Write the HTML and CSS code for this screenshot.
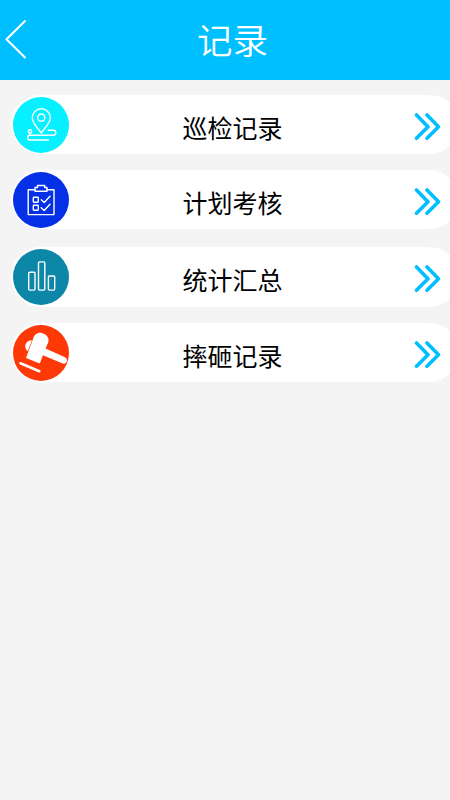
FILE: index.html
```
<!DOCTYPE html>
<html lang="zh-CN">
<head>
  <meta charset="UTF-8">
  <meta name="viewport" content="width=device-width, initial-scale=1">
  <title>记录</title>
  <link rel="stylesheet" href="styles.css">
</head>
<body>
  <header class="header">
    <a class="back" href="#" aria-label="返回">
      <svg width="30" height="44" viewBox="0 0 30 44"><path d="M25 3 L6.5 21.3 L25 39.5"/></svg>
    </a>
    <h1>记录</h1>
  </header>

  <main class="menu">
    <a class="item" href="#">
      <span class="icon patrol">
        <svg viewBox="0 0 56 56">
          <path d="M28.2 36 C24.5 30.5 19.3 26.5 19.3 20.8 A9 9 0 0 1 37.3 20.8 C37.3 26.5 32 30.5 28.2 36 Z"/>
          <circle cx="28.3" cy="20.6" r="3.6"/>
          <circle cx="17" cy="34.5" r="1.7"/>
          <path d="M17 36.2 V38.2 H40.4 A2.4 2.4 0 0 0 40.4 33.3 H35.2 M17 38.2 A2.4 2.4 0 0 0 17 43 H35.5"/>
        </svg>
      </span>
      <span class="label">巡检记录</span>
      <svg class="more" viewBox="0 0 28 28"><path d="M2.5 2 L14 13.7 L2.5 25.3 M13 2 L24.5 13.7 L13 25.3"/></svg>
    </a>
    <a class="item" href="#">
      <span class="icon plan">
        <svg viewBox="0 0 56 56">
          <path d="M22 17.8 H15.2 V42.6 H41 V17.8 H34"/>
          <path d="M22 19.3 V15.5 H24.5 V13.5 H31.7 V15.5 H34 V19.3 Z"/>
          <rect x="20.3" y="25.3" width="5" height="5" rx=".7"/>
          <rect x="20.3" y="33.3" width="5" height="5" rx=".7"/>
          <path d="M28.2 27.8 L31.2 30.5 L37 24.2 M28.2 35.7 L31.2 38.5 L37 32.2"/>
        </svg>
      </span>
      <span class="label">计划考核</span>
      <svg class="more" viewBox="0 0 28 28"><path d="M2.5 2 L14 13.7 L2.5 25.3 M13 2 L24.5 13.7 L13 25.3"/></svg>
    </a>
    <a class="item tall" href="#">
      <span class="icon stats">
        <svg viewBox="0 0 56 56">
          <rect x="15.7" y="23.3" width="6.3" height="17.8" rx="1"/>
          <rect x="25.5" y="12.9" width="6.3" height="28.2" rx="1"/>
          <rect x="35.4" y="27" width="6.3" height="14.1" rx="1"/>
        </svg>
      </span>
      <span class="label">统计汇总</span>
      <svg class="more" viewBox="0 0 28 28"><path d="M2.5 2 L14 13.7 L2.5 25.3 M13 2 L24.5 13.7 L13 25.3"/></svg>
    </a>
    <a class="item" href="#">
      <span class="icon smash">
        <svg viewBox="0 0 56 56">
          <path class="fill" d="M20.2 13.5 C21.6 9.2 24.8 7.6 28.5 7.9 C33.5 8.6 36.8 13 35.2 17.6 L32.6 23.6 L52 32.2 C55.6 34.2 53.9 39.6 49.7 38.5 L29.9 30.2 L26.8 38.5 L13 33 Z"/>
          <path class="fill" d="M19 15.3 C14.6 15.3 11.6 18.8 12.4 22.5 C12.8 24.6 13.6 25.5 14.9 26 Z"/>
          <path class="base" d="M7.5 38.3 L26.3 46.2"/>
        </svg>
      </span>
      <span class="label">摔砸记录</span>
      <svg class="more" viewBox="0 0 28 28"><path d="M2.5 2 L14 13.7 L2.5 25.3 M13 2 L24.5 13.7 L13 25.3"/></svg>
    </a>
  </main>
</body>
</html>
```
FILE: styles.css
```
* {
  box-sizing: border-box;
}
body {
  margin: 0;
  min-height: 100vh;
  overflow: hidden;
  background: #f4f4f4;
  color: #000;
  font-family: "Noto Sans CJK SC", sans-serif;
}
a {
  color: inherit;
  text-decoration: none;
}
svg {
  display: block;
  fill: none;
  stroke-linecap: round;
  stroke-linejoin: round;
}
.header {
  display: grid;
  grid-template-columns: 30px 1fr 30px;
  align-items: center;
  height: 80px;
  background: #00bfff;
  color: #fff;
}
.back svg {
  stroke: #fff;
  stroke-width: 2;
}
.header h1 {
  margin: 0 0 2px 15px;
  font-size: 35.5px;
  font-weight: 350;
  line-height: 76px;
  text-align: center;
}
.menu {
  display: flex;
  flex-direction: column;
  gap: 16px;
  padding: 15px 0 0 11px;
  /* the cards run off the right side of the screen */
  margin-right: -9px;
}
.item {
  display: grid;
  grid-template-columns: 56px 1fr 28px;
  align-items: center;
  height: 59px;
  padding: 0 17px 0 2px;
  border-radius: 30px;
  background: #fff;
}
.item.tall {
  height: 60.4px;
  margin-top: 2px;
  padding-bottom: 1px;
}
.icon {
  width: 56px;
  height: 56px;
  border-radius: 50%;
}
.icon svg {
  stroke: #fff;
  stroke-width: 1.4;
}
.patrol {
  background: #06f0ff;
}
.plan {
  background: #0530e6;
}
.stats {
  background: #0d87a7;
}
.smash {
  background: #ff3807;
}
.icon .fill {
  fill: #fff;
  stroke: none;
}
.icon .base {
  stroke-width: 2.6;
}
.label {
  padding: 5px 18px 0 0;
  font-size: 25px;
  line-height: 36px;
  text-align: center;
}
.more {
  width: 28px;
  height: 28px;
  margin-top: 5px;
  stroke: #00bfff;
  stroke-width: 3.6;
}
```
